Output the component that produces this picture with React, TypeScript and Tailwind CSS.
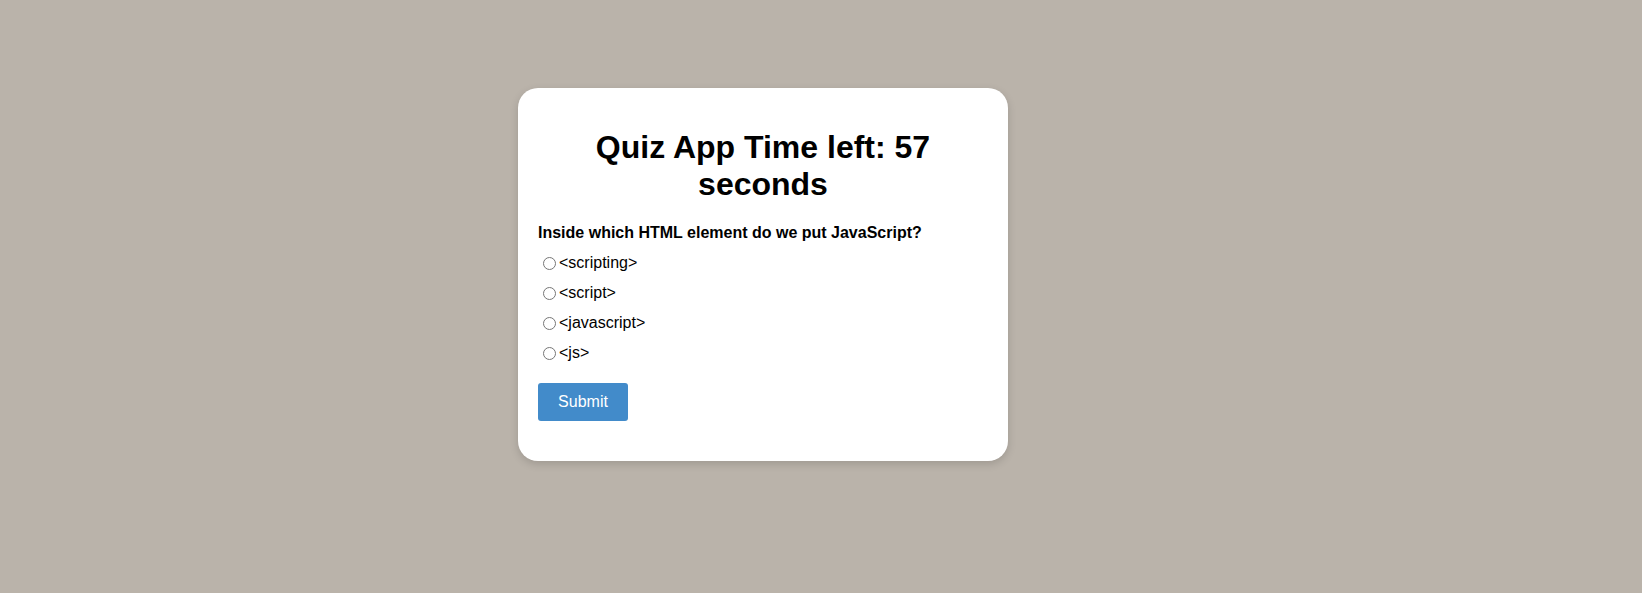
import React from "react";

const options = ["<scripting>", "<script>", "<javascript>", "<js>"];

export default function App() {
  return (
    <div
      className="w-full h-[593px] bg-[#bab3aa] pt-[88px] pl-[518px]"
      style={{ fontFamily: '"Liberation Sans", Arial, sans-serif' }}
    >
      <div className="w-[490px] bg-white rounded-[20px] p-[20px] shadow-[0_3px_8px_rgba(0,0,0,0.15)] text-black">
        <h1 className="text-[32px] leading-[37px] font-bold text-center my-[21px] px-[40px]">
          Quiz App Time left: 57 seconds
        </h1>
        <p className="text-[16px] leading-[18px] font-bold">
          Inside which HTML element do we put JavaScript?
        </p>
        <div className="mt-[12px] flex flex-col gap-[12px]">
          {options.map((o) => (
            <label key={o} className="flex items-center h-[18px] text-[16px] leading-[18px]">
              <input type="radio" name="q" className="m-0 ml-[5px] mr-[3px] w-[13px] h-[13px]" />
              <span>{o}</span>
            </label>
          ))}
        </div>
        <button className="mt-[21px] mb-[20px] w-[90px] h-[38px] bg-[#428bca] text-white text-[16px] rounded-[3px]">
          Submit
        </button>
      </div>
    </div>
  );
}
